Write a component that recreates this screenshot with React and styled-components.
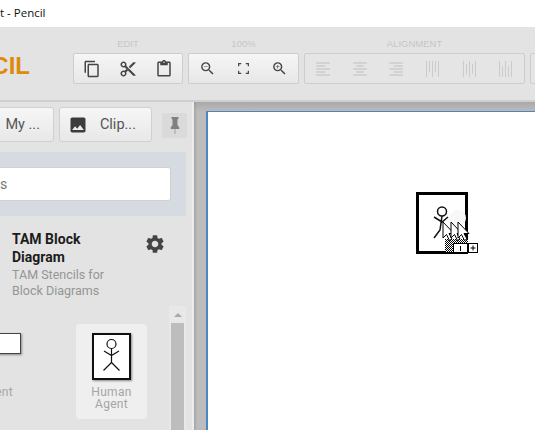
import { createGlobalStyle, styled } from 'styled-components';
import {
    MdContentCut,
    MdContentPaste,
    MdFormatAlignCenter,
    MdFormatAlignLeft,
    MdFormatAlignRight,
    MdImage,
    MdSettings,
    MdZoomIn,
    MdZoomOut,
} from 'react-icons/md';

const GlobalStyle = createGlobalStyle`
    html, body {
        margin: 0;
        padding: 0;
        height: 100%;
        overflow: hidden;
    }
    #root {
        height: 100%;
    }
`;

const Window = styled.div`
    width: 535px;
    height: 430px;
    display: flex;
    flex-direction: column;
    overflow: hidden;
    background: #fff;
    font-family: Roboto, sans-serif;
`;

const TitleBar = styled.div`
    height: 27px;
    flex: none;
    display: flex;
    align-items: center;
    padding-bottom: 3px;
    box-sizing: border-box;
    font-family: 'Open Sans', sans-serif;
    font-size: 11.5px;
    color: #111;
    white-space: pre;
`;

const Toolbar = styled.div`
    height: 75px;
    flex: none;
    display: flex;
    box-sizing: border-box;
    padding-top: 11px;
    background: #e3e3e3;
    border-bottom: 2px solid #cfcfcf;
`;

const LogoSlot = styled.div`
    width: 73px;
    height: 55px;
    flex: none;
    display: flex;
    justify-content: flex-end;
    align-items: center;
    padding: 0 43px 0 0;
    box-sizing: border-box;
`;

const Logo = styled.div`
    flex: none;
    font-family: 'Liberation Sans', sans-serif;
    font-size: 24px;
    font-weight: 700;
    line-height: 30px;
    color: #e08a0c;
`;

const ToolSection = styled.div`
    flex: none;
    display: flex;
    flex-direction: column;
    align-items: center;
    margin-right: 5px;
`;

const ToolLabel = styled.div`
    height: 15px;
    font-family: 'Liberation Sans', sans-serif;
    font-size: 9.5px;
    line-height: 12px;
    color: #c6c6c6;
`;

const ToolGroup = styled.div`
    width: ${(props) => props.width}px;
    height: 31px;
    box-sizing: border-box;
    display: flex;
    border: 1px solid #cdcdcd;
    border-radius: 2px;
    background: ${(props) =>
        props.disabled
            ? '#e5e5e5'
            : 'linear-gradient(to bottom, #f6f6f6, #e7e7e7)'};
`;

const ToolButton = styled.div`
    flex: 1;
    display: flex;
    align-items: center;
    justify-content: center;
    color: ${(props) => (props.disabled ? '#cbcbcb' : '#454545')};
    font-size: ${(props) => props.size || 18}px;
`;

const Main = styled.div`
    flex: 1;
    min-height: 0;
    display: flex;
`;

const Sidebar = styled.div`
    width: 194px;
    flex: none;
    display: flex;
    flex-direction: column;
    box-sizing: border-box;
    background: #e3e3e3;
    border-right: 2px solid #ececec;
`;

const TabRow = styled.div`
    height: 50px;
    flex: none;
    display: flex;
    justify-content: flex-end;
    align-items: flex-start;
    gap: 5px;
    padding: 5px 5px 0 0;
    box-sizing: border-box;
    overflow: hidden;
`;

const TabButton = styled.div`
    width: ${(props) => props.width}px;
    height: 35px;
    flex: none;
    display: flex;
    align-items: center;
    justify-content: flex-end;
    gap: ${(props) => props.gap || 0}px;
    padding-right: ${(props) => props.pad}px;
    box-sizing: border-box;
    border: 1px solid #d0d0d0;
    border-radius: 3px;
    background: linear-gradient(to bottom, #f6f6f6, #e8e8e8);
    color: #555;
    font-size: 14.5px;
`;

const PinButton = styled.div`
    width: 25px;
    height: 25px;
    flex: none;
    margin-left: 5px;
    margin-top: 6px;
    display: flex;
    align-items: center;
    justify-content: center;
    border-radius: 2px;
    background: #dadada;
`;

const SearchPanel = styled.div`
    height: 64px;
    flex: none;
    margin-right: 6px;
    padding: 15px 15px 0 0;
    box-sizing: border-box;
    background: #d6dae1;
`;

const SearchBox = styled.div`
    height: 34px;
    display: flex;
    align-items: center;
    box-sizing: border-box;
    border: 1px solid #d0d0d0;
    border-left: none;
    border-radius: 0 3px 3px 0;
    background: #fff;
    color: #777;
    font-size: 14px;
`;

const CollectionHeader = styled.div`
    height: 90px;
    flex: none;
    display: flex;
    justify-content: space-between;
    padding: 14px 27px 0 12px;
    box-sizing: border-box;
`;

const CollectionText = styled.div`
    width: 110px;
`;

const CollectionTitle = styled.div`
    font-size: 14px;
    font-weight: 700;
    line-height: 18px;
    color: #1c1c1c;
`;

const CollectionDesc = styled.div`
    margin-top: 1px;
    font-size: 12.5px;
    line-height: 16px;
    color: #959595;
`;

const GearSlot = styled.div`
    font-size: 22px;
    line-height: 0;
    color: #444;
    margin-top: 3px;
    margin-right: -1px;
`;

const ShapeArea = styled.div`
    flex: 1;
    min-height: 0;
    display: flex;
    margin-right: 6px;
`;

const ShapeList = styled.div`
    flex: 1;
    min-width: 0;
    display: flex;
    justify-content: flex-end;
    align-items: flex-start;
    gap: 50px;
    padding: 18px 22px 0 0;
    box-sizing: border-box;
    overflow: hidden;
`;

const ShapeTile = styled.div`
    width: ${(props) => props.width}px;
    height: 95px;
    flex: none;
    display: flex;
    flex-direction: column;
    align-items: center;
    padding-top: 9px;
    box-sizing: border-box;
    border-radius: 4px;
    background: ${(props) => (props.active ? '#efefef' : 'transparent')};
`;

const ShapeThumb = styled.div`
    height: 53px;
    flex: none;
`;

const BlockThumb = styled.div`
    width: 76px;
    height: 21px;
    box-sizing: border-box;
    border: 1px solid #444;
    background: #fff;
    box-shadow: 1px 1px 2px #8a8a8a;
`;

const ActorThumb = styled.div`
    width: 39px;
    height: 47px;
    box-sizing: border-box;
    border: 2px solid #111;
    background: #fff;
    box-shadow: 1px 1px 2px #8a8a8a;
    line-height: 0;
`;

const ShapeLabel = styled.div`
    width: 70px;
    font-size: 12px;
    line-height: 12px;
    letter-spacing: 0.3px;
    color: #a5a5a5;
    text-align: center;
`;

const ClippedLabel = styled(ShapeLabel)`
    width: 76px;
    white-space: nowrap;
    text-align: right;
    padding-right: 8px;
    box-sizing: border-box;
`;

const Scrollbar = styled.div`
    width: 17px;
    flex: none;
    display: flex;
    flex-direction: column;
    align-items: center;
    background: #e8e8e8;
`;

const ScrollArrow = styled.div`
    height: 17px;
    flex: none;
    display: flex;
    align-items: center;
    justify-content: center;
    &::before {
        content: '';
        border-left: 4px solid transparent;
        border-right: 4px solid transparent;
        border-bottom: 4px solid #a9a9a9;
    }
`;

const ScrollThumb = styled.div`
    width: 13px;
    flex: 1;
    background: #bdbdbd;
`;

const CanvasPane = styled.div`
    flex: 1;
    min-width: 0;
    padding: 9px 0 0 12px;
    box-sizing: border-box;
    background: linear-gradient(to bottom, #a9a9a9, #bcbcbc 10px);
    box-shadow: inset 3px 0 3px -2px #9c9c9c;
`;

const Page = styled.div`
    position: relative;
    height: 100%;
    box-sizing: border-box;
    background: #fff;
    border-top: 1px solid #4a86c6;
    border-left: 2px solid #4a86c6;
`;

const DragShape = styled.svg`
    position: absolute;
    left: 208px;
    top: 80px;
    display: block;
`;

const DistributeIcon = ({ bars }) => (
    <svg width="15" height="16" viewBox="0 0 15 16" fill="currentColor">
        {bars.map(([x, y, h]) => (
            <rect key={x} x={x} y={y} width="1" height={h} />
        ))}
    </svg>
);

const CopyIcon = () => (
    <svg width="18" height="18" viewBox="0 0 24 24" fill="currentColor">
        <path d="M16 1H4c-1.1 0-2 .9-2 2v14h2V3h12V1zm3 4H8c-1.1 0-2 .9-2 2v14c0 1.1.9 2 2 2h11c1.1 0 2-.9 2-2V7c0-1.1-.9-2-2-2zm0 16H8V7h11v14z" />
    </svg>
);

const FitIcon = () => (
    <svg width="11" height="11" viewBox="0 0 12 12" fill="none" stroke="currentColor" strokeWidth="1.3">
        <path d="M.7 3.500V.7h2.800M8.500.7h2.800v2.800M11.300 8.500v2.800H8.500M3.500 11.300H.7V8.500" />
    </svg>
);

const PinIcon = () => (
    <svg width="12" height="19" viewBox="0 0 12 19" fill="#808080">
        <path d="M2.500 1h7v1.500L8.500 3.500V9l1.800 2.500V13H1.700v-1.500L3.500 9V3.500L2.500 2.500z" />
        <rect x="5.500" y="13" width="1" height="5" fill="#a0a0a0" />
    </svg>
);

const StickFigure = () => (
    <svg width="35" height="43" viewBox="0 0 35 43" fill="none" stroke="#111" strokeWidth="1.2">
        <circle cx="17.500" cy="9" r="4.500" />
        <path d="M17.500 13.500V27.500M10 16l7.500 4.500L25 16M17.500 27.500l-8 8M17.500 27.500l8 8" />
    </svg>
);

const CURSOR = 'l0 16 3.500-3.500 3 6 2.500-1.500-3-5.500 5 0z';

export default function App() {
    return (
        <Window>
            <GlobalStyle />
            <TitleBar>t - Pencil</TitleBar>
            <Toolbar>
                <LogoSlot>
                    <Logo>PENCIL</Logo>
                </LogoSlot>
                <ToolSection>
                    <ToolLabel>EDIT</ToolLabel>
                    <ToolGroup width={110}>
                        <ToolButton><CopyIcon /></ToolButton>
                        <ToolButton><MdContentCut /></ToolButton>
                        <ToolButton><MdContentPaste /></ToolButton>
                    </ToolGroup>
                </ToolSection>
                <ToolSection>
                    <ToolLabel>100%</ToolLabel>
                    <ToolGroup width={111}>
                        <ToolButton size={17}><MdZoomOut /></ToolButton>
                        <ToolButton><FitIcon /></ToolButton>
                        <ToolButton size={17}><MdZoomIn /></ToolButton>
                    </ToolGroup>
                </ToolSection>
                <ToolSection>
                    <ToolLabel>ALIGNMENT</ToolLabel>
                    <ToolGroup width={221} disabled>
                        <ToolButton disabled><MdFormatAlignLeft /></ToolButton>
                        <ToolButton disabled><MdFormatAlignCenter /></ToolButton>
                        <ToolButton disabled><MdFormatAlignRight /></ToolButton>
                        <ToolButton disabled>
                            <DistributeIcon bars={[[1, 0, 16], [4, 0, 11], [7, 0, 16], [10, 0, 11], [13, 0, 16]]} />
                        </ToolButton>
                        <ToolButton disabled>
                            <DistributeIcon bars={[[1, 0, 16], [4, 3, 10], [7, 0, 16], [10, 3, 10], [13, 0, 16]]} />
                        </ToolButton>
                        <ToolButton disabled>
                            <DistributeIcon bars={[[1, 0, 16], [4, 5, 11], [7, 0, 16], [10, 5, 11], [13, 0, 16]]} />
                        </ToolButton>
                    </ToolGroup>
                </ToolSection>
                <ToolSection>
                    <ToolLabel>&nbsp;</ToolLabel>
                    <ToolGroup width={100} disabled />
                </ToolSection>
            </Toolbar>
            <Main>
                <Sidebar>
                    <TabRow>
                        <TabButton width={94} pad={13}>My ...</TabButton>
                        <TabButton width={93} pad={15} gap={12}>
                            <MdImage size={20} color="#3c3c3c" />
                            Clip...
                        </TabButton>
                        <PinButton><PinIcon /></PinButton>
                    </TabRow>
                    <SearchPanel>
                        <SearchBox>s</SearchBox>
                    </SearchPanel>
                    <CollectionHeader>
                        <CollectionText>
                            <CollectionTitle>TAM Block Diagram</CollectionTitle>
                            <CollectionDesc>TAM Stencils for Block Diagrams</CollectionDesc>
                        </CollectionText>
                        <GearSlot><MdSettings /></GearSlot>
                    </CollectionHeader>
                    <ShapeArea>
                        <ShapeList>
                            <ShapeTile width={86}>
                                <ShapeThumb><BlockThumb /></ShapeThumb>
                                <ClippedLabel>Component</ClippedLabel>
                            </ShapeTile>
                            <ShapeTile width={71} active>
                                <ShapeThumb>
                                    <ActorThumb><StickFigure /></ActorThumb>
                                </ShapeThumb>
                                <ShapeLabel>Human Agent</ShapeLabel>
                            </ShapeTile>
                        </ShapeList>
                        <Scrollbar>
                            <ScrollArrow />
                            <ScrollThumb />
                        </Scrollbar>
                    </ShapeArea>
                </Sidebar>
                <CanvasPane>
                    <Page>
                        <DragShape width="64" height="64" viewBox="0 0 64 64">
                            <defs>
                                <pattern id="dither" width="2" height="2" patternUnits="userSpaceOnUse">
                                    <rect width="2" height="2" fill="#fff" />
                                    <rect width="1" height="1" fill="#000" />
                                    <rect x="1" y="1" width="1" height="1" fill="#000" />
                                </pattern>
                            </defs>
                            <rect x="1.500" y="1.500" width="49" height="59" fill="#fff" stroke="#000" strokeWidth="3" />
                            <circle cx="42" cy="26" r="8" fill="#f8f8f8" />
                            <g fill="none" stroke="#111" strokeWidth="1.500">
                                <circle cx="26" cy="19.500" r="4.500" />
                                <path d="M26 24l-2 14-6 8M18 25l8 5 6-5" />
                            </g>
                            <rect x="29" y="47" width="23" height="13" fill="url(#dither)" />
                            <rect x="37.500" y="51.500" width="14" height="9" fill="#fff" stroke="#000" />
                            <path d={`M27 30${CURSOR}`} fill="#fff" stroke="#000" />
                            <path d={`M35 30${CURSOR}`} fill="#fff" stroke="#000" />
                            <path d={`M42 30${CURSOR}`} fill="#fff" stroke="#000" />
                            <rect x="52.500" y="51.500" width="9" height="9" fill="#fff" stroke="#000" />
                            <path d="M57 53.500v5M54.500 56h5M44.500 54v5" stroke="#000" fill="none" />
                        </DragShape>
                    </Page>
                </CanvasPane>
            </Main>
        </Window>
    );
}
